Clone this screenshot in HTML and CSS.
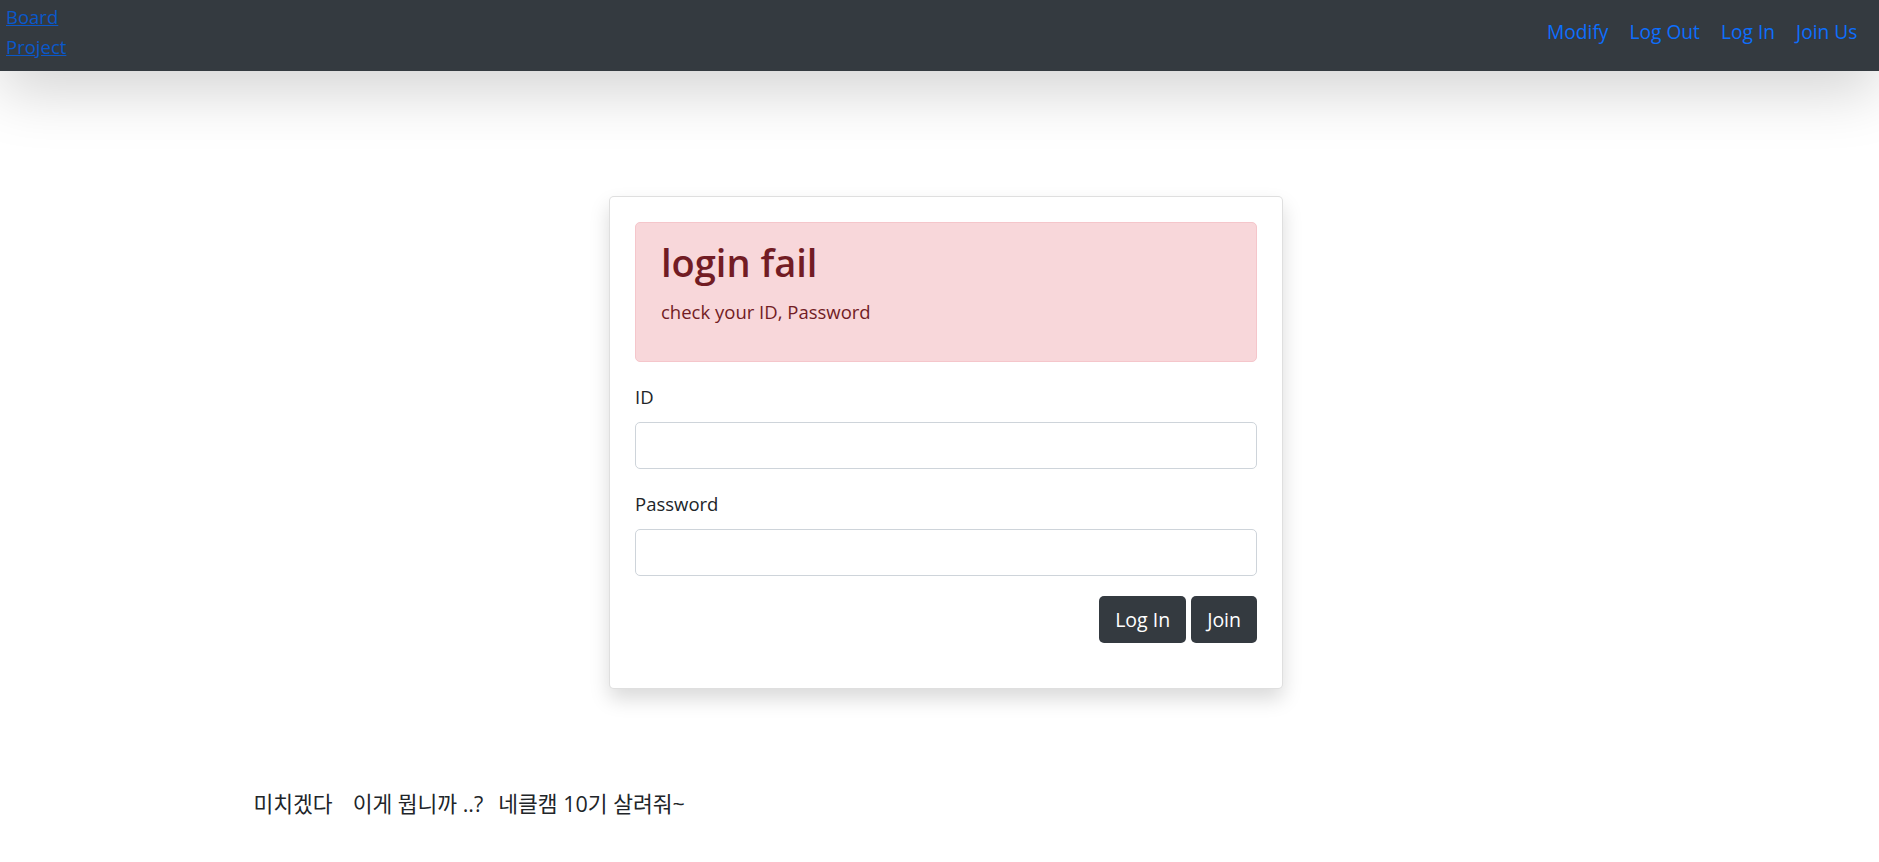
FILE: index.html
```html
<!DOCTYPE html>
<html lang="ko">
<head>
  <meta charset="UTF-8">
  <meta name="viewport" content="width=device-width, initial-scale=1.0">
  <title>Board Project - Log In</title>
  <link rel="stylesheet" href="styles.css">
</head>

<body>
  <nav class="topbar">
    <a class="brand" href="#">Board Project</a>
    <ul class="menu">
      <li><a href="#">Modify</a></li>
      <li><a href="#">Log Out</a></li>
      <li><a href="#">Log In</a></li>
      <li><a href="#">Join Us</a></li>
    </ul>
  </nav>

  <main class="content">
    <div class="login-wrap">
      <form class="card" id="form-login">
        <div class="alert">
          <h2 class="alert-title">login fail</h2>
          <p>check your ID, Password</p>
        </div>

        <div class="field">
          <label for="inputId">ID</label>
          <input id="inputId" type="text">
        </div>

        <div class="field">
          <label for="inputPw">Password</label>
          <input id="inputPw" type="password">
        </div>

        <div class="actions">
          <button type="submit" class="darkButton">Log In</button>
          <button type="button" class="darkButton">Join</button>
        </div>
      </form>
    </div>

    <div class="notes">
      <span class="note-first">미치겠다</span>
      <span>이게 뭡니까 ..?</span>
      <span>네클캠 10기 살려줘~</span>
    </div>
  </main>
</body>
</html>
```

FILE: styles.css
```css
* {
  box-sizing: border-box;
}

body {
  margin: 0;
  font-family: "Open Sans", "Noto Sans CJK KR", sans-serif;
  font-size: 18.5px;
  line-height: 30px;
  color: #212529;
  background-color: #fff;
}

/* top bar */
.topbar {
  display: flex;
  justify-content: space-between;
  align-items: center;
  height: 71px;
  background-color: #343a40;
  box-shadow: 0 20px 60px rgba(0, 0, 0, 0.175);
}

.brand {
  align-self: flex-start;
  width: 76px;
  padding: 2px 0 0 6px;
  color: #0a58ca;
  text-decoration: underline;
}

.menu {
  display: flex;
  list-style: none;
  margin: 0 0 7px;
  padding: 0 11px 0 0;
}

.menu a {
  display: block;
  padding: 0 10.5px;
  font-size: 19.2px;
  color: #0d6efd;
  text-decoration: none;
}

/* login card */
.content {
  padding-top: 125px;
}

.login-wrap {
  display: flex;
  justify-content: center;
  padding-left: 13px;
}

.card {
  width: 674px;
  padding: 25px;
  border: 1px solid rgba(0, 0, 0, 0.125);
  border-radius: 5px;
  background-color: #fff;
  box-shadow: 0 10px 20px rgba(0, 0, 0, 0.15);
}

.alert {
  padding: 17px 25px 14px;
  margin-bottom: 20px;
  border: 1px solid #f5c6cb;
  border-radius: 5px;
  background-color: #f8d7da;
  color: #721c24;
}

.alert-title {
  margin: 0 0 11px;
  font-size: 38px;
  font-weight: 600;
  line-height: 1.2;
}

.alert p {
  margin: 0 0 20px;
}

.field {
  margin-bottom: 20px;
}

.field label {
  display: block;
  margin-bottom: 10px;
}

.field input {
  display: block;
  width: 100%;
  height: 47px;
  padding: 0 15px;
  border: 1px solid #ced4da;
  border-radius: 5px;
  font: inherit;
  outline: none;
}

.actions {
  display: flex;
  justify-content: flex-end;
  gap: 5px;
  margin-bottom: 20px;
}

.darkButton {
  height: 47px;
  padding: 0 16px;
  border: none;
  border-radius: 5px;
  background-color: #343a40;
  color: #fff;
  font-family: inherit;
  font-size: 19.5px;
}

/* bottom text */
.notes {
  display: flex;
  gap: 15px;
  width: 1372px;
  margin: 100px auto 0;
  font-size: 21.5px;
}

.note-first {
  margin-right: 5px;
}
```
